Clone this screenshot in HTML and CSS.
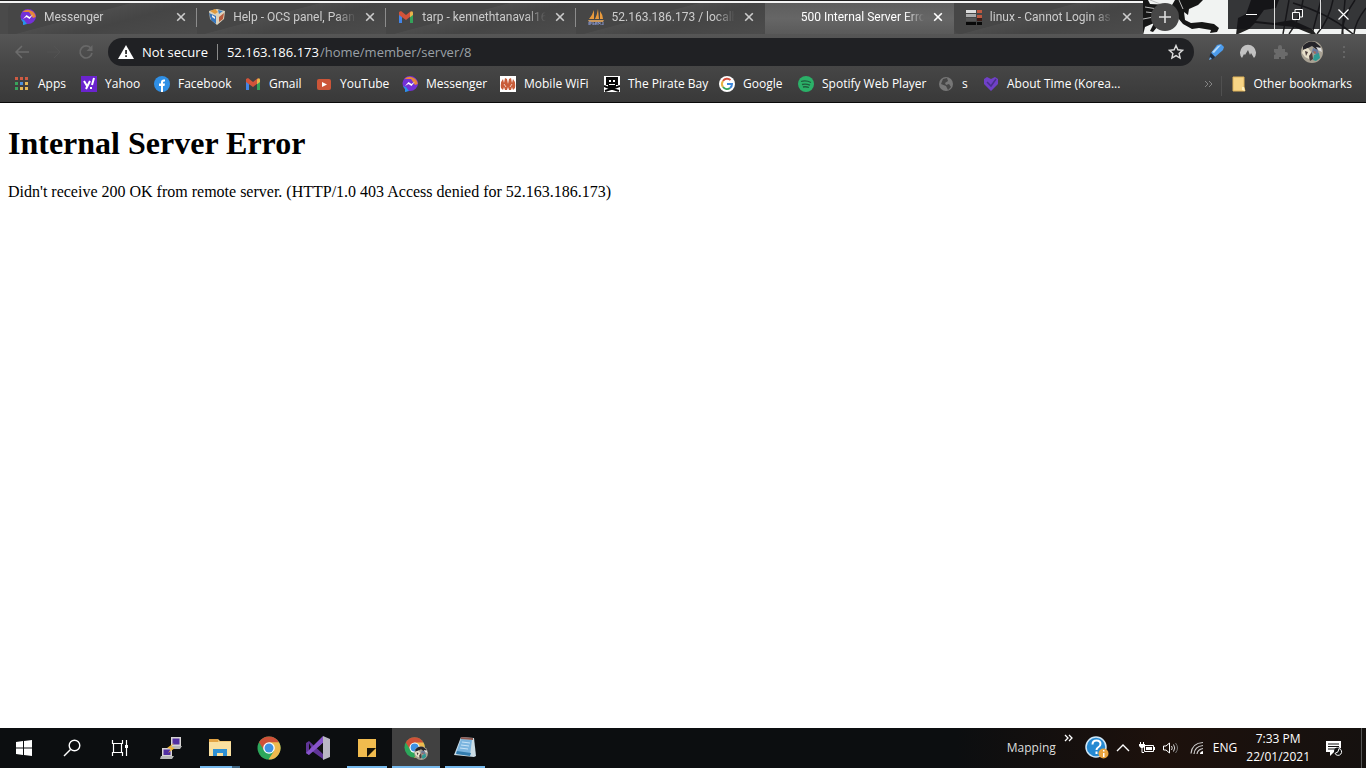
FILE: index.html
```html
<!DOCTYPE html>
<html lang="en">
<head>
<meta charset="utf-8">
<title>500 Internal Server Error</title>
<link rel="stylesheet" href="styles.css">
</head>
<body>
<svg class="defs" aria-hidden="true">
  <symbol id="messenger" viewBox="0 0 16 16"><path d="M8 0a8 7.500 0 0 1 0 15l-2-.3L3 16v-3A7.500 7.500 0 0 1 8 0z" fill="#7430d8"/><path d="M2.500 3A8 8 0 0 1 15.800 8L13 9 9 3z" fill="#e5863b"/><path d="M1 10l3 1 3 4-4 1v-3z" fill="#2795e9"/><path d="M3 10l3.500-4 3 2L13 5.500 9.500 10l-3-2z" fill="#fff"/></symbol>
  <symbol id="gmail" viewBox="0 0 16 16"><path d="M1 4v10h3V6z" fill="#4285e8"/><path d="M15 4v10h-3V6z" fill="#34a25a"/><path d="M1 3l2-1 5 4 5-4v5L8 11 3 7.500 1 6z" fill="#d3533a"/><path d="M12 3.500L14 2l1 1.500V6l-3 2.300z" fill="#eab34b"/></symbol>
  <symbol id="x" viewBox="0 0 10 10"><path d="M1.200 1.200l7.600 7.600m0-7.600L1.200 8.800" stroke="currentColor" stroke-width="1.600" fill="none"/></symbol>
  <symbol id="chrome" viewBox="0 0 24 24"><circle cx="12" cy="12" r="11.500" fill="#2ca75b"/><path d="M12 12L2 6.300A11.500 11.500 0 0 1 22 6.300z" fill="#cf5138"/><path d="M12 6.300h10A11.500 11.500 0 0 1 11.500 23.500L17 15z" fill="#eeb94e"/><path d="M2 6.300L7.500 15 12 6z" fill="#cf5138"/><circle cx="12" cy="12" r="5.800" fill="#fff"/><circle cx="12" cy="12" r="4.500" fill="#3f91e3"/></symbol>
  <symbol id="avatar" viewBox="0 0 22 22"><circle cx="11" cy="11" r="11" fill="#a9a294"/><path d="M2 5Q7-1 14 1l6 5-4 3-5-4-4 2-5 2z" fill="#25242a"/><path d="M2 9l5-2 3 4-2 7-4-2-3-4z" fill="#e7dfca"/><path d="M4 10l3 1-2 4zM8 15l3-4 1 7-3 2z" fill="#4b3c3c"/><path d="M12 7l5 2 1 5-4-1-3-2z" fill="#68799d"/><path d="M15 6l5 1 1 4-4-2z" fill="#ddd"/><path d="M13 14l5-2 1 5-4 3-3-1z" fill="#2f9a94"/><path d="M12 10l3 1-1 2z" fill="#b96742"/></symbol>
</svg>

<header class="browser">
  <div class="strip">
    <nav class="tabs" aria-label="Open tabs">
      <div class="tab">
        <svg class="ico"><use href="#messenger"/></svg><a class="tab-title" href="#">Messenger</a>
        <button class="close" aria-label="Close tab"><svg><use href="#x"/></svg></button>
      </div>
      <div class="tab">
        <svg class="ico" viewBox="0 0 16 16"><path d="M0 2l8-2 8 2-1 8-7 6-7-6z" fill="#dcd3bd"/><path d="M0 4l7 3v8L2 11z" fill="#3575bd"/><path d="M1 2l5-2 3 3-3 2z" fill="#e09a3c"/><path d="M9 1l5 1-4 3z" fill="#3e83c7"/><path d="M10 8l5-4-1 6-4 3z" fill="#b75a3c"/><path d="M3 6l3 2v2L3 8z" fill="#eee"/></svg><a class="tab-title" href="#">Help - OCS panel, Paan</a>
        <button class="close" aria-label="Close tab"><svg><use href="#x"/></svg></button>
      </div>
      <div class="tab">
        <svg class="ico"><use href="#gmail"/></svg><a class="tab-title" href="#">tarp - kennethtanaval16</a>
        <button class="close" aria-label="Close tab"><svg><use href="#x"/></svg></button>
      </div>
      <div class="tab">
        <svg class="ico" viewBox="0 0 16 16"><path d="M6 1v9H1q3-3 5-9zM10 0l1 10H7q2-4 3-10zM12 2q3 4 3 8h-3z" fill="#e99a3c"/><path d="M0 11h16l-1 2H1z" fill="#c9975c"/><path d="M1 16v-3h2v2H1m4-2v3m0-1h3v-2m0 3v-3m2 3v-3l2 2v-2m0 3h3v-3" stroke="#8493c9" fill="none"/></svg><a class="tab-title" href="#">52.163.186.173 / localh</a>
        <button class="close" aria-label="Close tab"><svg><use href="#x"/></svg></button>
      </div>
      <div class="tab active">
        <span class="ico"></span><a class="tab-title" href="#" aria-current="page">500 Internal Server Erro</a>
        <button class="close" aria-label="Close tab"><svg><use href="#x"/></svg></button>
      </div>
      <div class="tab">
        <svg class="ico" viewBox="0 0 16 16"><path d="M0 1h10v3H0z" fill="#ddd"/><path d="M0 5h10v3H0z" fill="#aaa"/><path d="M11 1h5v3h-5zM11 6h5v3h-5z" fill="#bd5840"/><path d="M11 9h5v3h-5z" fill="#3b1d18"/><path d="M0 9h10v3H0z" fill="#555"/><path d="M0 13h10v3H0zM11 13h5v3h-5z" fill="#090909"/></svg><a class="tab-title" href="#">linux - Cannot Login as</a>
        <button class="close" aria-label="Close tab"><svg><use href="#x"/></svg></button>
      </div>
    </nav>
    <div class="strip-end">
      <svg class="art" viewBox="0 0 223 34" preserveAspectRatio="none" aria-hidden="true">
        <path fill="#f1f3f2" d="M0 0h223v34H0z"/>
        <path fill="#161616" d="M0 0h5l2 4 22 1L32 0h28l-5 5-9 4-1 6-4-3 1 8 6 3 11-1 12 2 5 4-2 4-7 1 1-3-12-2-7 1-9-5-5-6-2 6-9 4-9-2-5 6-3-1 4-8-9 4-2 8z"/>
        <path d="M2 7l25 4M3 12l18 2M0 19l16-3M7 0l18 7M36 0l4 9" stroke="#bbb" fill="none"/>
        <path fill="#202020" d="M95 18l8-4 5-14h28l-3 8-12 2-8 11 18 2 18-3 20 9 4 5h-5l-17-7-20-2-19-2-6 6-13 6z"/>
        <path d="M146 0l-6 34M160 0q-2 18-14 34M178 0l-9 34M190 0q-4 20-16 34M202 0l-3 34M212 0q-14 20-12 34M223 8q-11 14-12 26M150 3q35 10 60 31" stroke="#222" stroke-width="1.500" fill="none"/>
      </svg>
      <button class="new-tab" aria-label="New tab"><svg viewBox="0 0 12 12"><path d="M6 0v12M0 6h12" stroke="#ddd" stroke-width="1.600"/></svg></button>
      <div class="window-controls">
        <button aria-label="Minimize"><svg viewBox="0 0 11 11"><path d="M0 5.500h11" stroke="#fff"/></svg></button>
        <button aria-label="Restore"><svg viewBox="0 0 11 11"><path d="M.5 3.500h7v7h-7zM3 3V.5h7.500V8H8" stroke="#fff" fill="none"/></svg></button>
        <button aria-label="Close"><svg viewBox="0 0 11 11"><path d="M.5.500l10 10m0-10l-10 10" stroke="#fff" stroke-width="1.200"/></svg></button>
      </div>
    </div>
  </div>

  <div class="toolbar">
    <button class="nav-button" aria-label="Back"><svg viewBox="0 0 16 16"><path d="M15 8H2m6-6L2 8l6 6" stroke="#6c6c6c" stroke-width="1.500" fill="none"/></svg></button>
    <button class="nav-button" aria-label="Forward"><svg viewBox="0 0 16 16"><path d="M1 8h13M8 2l6 6-6 6" stroke="#535353" stroke-width="1" fill="none"/></svg></button>
    <button class="nav-button" aria-label="Reload"><svg viewBox="0 0 16 16"><path d="M13 4.500A6 6 0 1 0 14 9" stroke="#686868" stroke-width="1.700" fill="none"/><path d="M14.500 1v6h-6z" fill="#686868"/></svg></button>
    <form class="address">
      <svg class="warn" viewBox="0 0 16 14"><path d="M8 0l8 14H0z" fill="#fff"/><path d="M7.200 5h1.700v4H7.200zM7.200 10.300h1.700V12H7.200z" fill="#222"/></svg>
      <span class="security">Not secure</span>
      <label for="url">52.163.186.173</label>
      <input id="url" type="text" value="/home/member/server/8">
      <button class="star" type="button" aria-label="Bookmark this page"><svg viewBox="0 0 16 16"><path d="M8 1.500l1.900 4.300 4.700.5-3.500 3.100 1 4.600L8 11.600 3.900 14l1-4.600L1.400 6.300l4.700-.5z" stroke="#ddd" stroke-width="1.400" fill="none"/></svg></button>
    </form>
    <div class="extensions">
      <button aria-label="Highlighter"><svg viewBox="0 0 16 16"><path d="M9 1l4-1 3 3-1 3-8 7-4-4z" fill="#4c9ced"/><path d="M10 2l3-1-7 8-2-1z" fill="#b9dcfa"/><path d="M3 9l4 4-2 2-4 1 1-5z" fill="#1d2d42"/><path d="M1 16l1-3 2 2z" fill="#7ab5ee"/></svg></button>
      <button aria-label="NordVPN"><svg viewBox="0 0 16 16"><path d="M2 14A8 8 0 1 1 14 14l-3-5-1 2-2-5-3 5-1-1z" fill="#c2c2c2"/></svg></button>
      <button aria-label="Extensions"><svg viewBox="0 0 16 16"><path d="M2 5h4V3a2 2 0 0 1 4 0v2h3v3h1a2 2 0 0 1 0 4h-1v3H9v-2H7v2H2v-4l2-1-2-2z" fill="#6b6b6b"/></svg></button>
      <button class="profile" aria-label="Profile"><svg><use href="#avatar"/></svg></button>
      <button aria-label="Menu"><svg viewBox="0 0 16 16"><path d="M7 2h2v2H7zM7 7h2v2H7zM7 12h2v2H7z" fill="#666"/></svg></button>
    </div>
  </div>

  <nav class="bookmarks" aria-label="Bookmarks">
    <a href="#"><svg class="ico" viewBox="0 0 16 16"><path d="M1 1h3v3H1zM6 1h3v3H6zM11 1h3v3h-3z" fill="#ce5b43"/><path d="M1 6h3v3H1zM1 11h3v3H1z" fill="#39a35c"/><path d="M6 6h3v3H6z" fill="#4b91dc"/><path d="M11 6h3v3h-3zM11 11h3v3h-3zM6 11h3v3H6z" fill="#e5b956"/></svg>Apps</a>
    <a href="#"><svg class="ico" viewBox="0 0 16 16"><path d="M0 0h16v16H0z" fill="#6b24cf"/><path d="M3 5l3 5M9 5l-4 8M13 2l-2 7M10 11v2" stroke="#fff" stroke-width="2" fill="none"/></svg>Yahoo</a>
    <a href="#"><svg class="ico" viewBox="0 0 16 16"><circle cx="8" cy="8" r="8" fill="#2f8fe5"/><path d="M7 16v-6H5V7.500h2V6q0-3 4-2.500v2q-2-.2-2 1v1h2L10.500 10H9v6z" fill="#fff"/></svg>Facebook</a>
    <a href="#"><svg class="ico"><use href="#gmail"/></svg>Gmail</a>
    <a href="#"><svg class="ico" viewBox="0 0 16 16"><rect x="1" y="3" width="14" height="11" rx="2" fill="#cc5538"/><path d="M6 6l5 2.500L6 11z" fill="#fff"/></svg>YouTube</a>
    <a href="#"><svg class="ico"><use href="#messenger"/></svg>Messenger</a>
    <a href="#"><svg class="ico" viewBox="0 0 16 16"><path d="M0 0h16v16H0z" fill="#fff"/><path d="M1 12Q0 6 3 3l1 4 1-5 2 1 1 5 1-5 2-1 1 5 1-4q3 3 2 9l-2 2-1-3-1 3H9l-1-3-1 3H5l-1-3-1 3z" fill="#c95c38"/><path d="M4 8l2 3M12 8l-2 3" stroke="#fff" stroke-width=".7"/></svg>Mobile WiFi</a>
    <a href="#"><svg class="ico" viewBox="0 0 16 16"><path d="M0 0h16v16H0z" fill="#fff"/><path d="M2 1h12v8H2zM4 9h8v3H4z" fill="#080808"/><path d="M5 4h2v2H5zM9 4h2v2H9zM5 8h6v1H5z" fill="#fff"/><path d="M0 10l5 2 3 1 8-3M1 15l6-2h2l6 2" stroke="#080808" stroke-width="2" fill="none"/></svg>The Pirate Bay</a>
    <a href="#"><svg class="ico" viewBox="0 0 16 16"><circle cx="8" cy="8" r="8" fill="#fff"/><path d="M4 5a5 5 0 0 1 7.500-1" stroke="#d64e3b" stroke-width="2" fill="none"/><path d="M4 5a5 5 0 0 0 0 6" stroke="#e7b143" stroke-width="2" fill="none"/><path d="M4 11a5 5 0 0 0 7 1" stroke="#35a45b" stroke-width="2" fill="none"/><path d="M8 8h5a5 5 0 0 1-2 4" stroke="#3c87dc" stroke-width="2" fill="none"/></svg>Google</a>
    <a href="#"><svg class="ico" viewBox="0 0 16 16"><circle cx="8" cy="8" r="8" fill="#2bb168"/><path d="M3 5.500q5-1.500 10 1M4 8.500q4-1 8 .7M5 11q3-.7 6 .5" stroke="#205c3c" stroke-width="1.300" fill="none"/></svg>Spotify Web Player</a>
    <a href="#"><svg class="ico" viewBox="0 0 16 16"><circle cx="8" cy="8" r="7" fill="#777"/><path d="M5 3l4-1 1 3-3 2 1 2 3-1 2 3-3 3-2-4-5-2z" fill="#464646"/></svg>s</a>
    <a href="#"><svg class="ico" viewBox="0 0 16 16"><path d="M8 15L1 8V3l3-2 4 2 4-2 3 2v5z" fill="#7040c8"/><path d="M4 6l4 4 5-7" stroke="#47308a" stroke-width="1.500" fill="none"/></svg>About Time (Korea...</a>
    <button class="overflow" aria-label="More bookmarks"><svg viewBox="0 0 9 8"><path d="M1 1l3 3-3 3m4-6l3 3-3 3" stroke="#858585" fill="none"/></svg></button>
    <a class="other" href="#"><svg class="ico" viewBox="0 0 16 16"><path d="M2 1h11v10l1 4H2z" fill="#f7d586" stroke="#dfb35b"/><path d="M11 14v-3h2l1 4z" fill="#fff0bd"/></svg>Other bookmarks</a>
  </nav>
</header>

<main class="page">
  <h1>Internal Server Error</h1>
  <p>Didn't receive 200 OK from remote server. (HTTP/1.0 403 Access denied for 52.163.186.173)</p>
</main>

<footer class="taskbar">
  <div class="system">
    <button aria-label="Start"><svg viewBox="0 0 24 24"><path d="M4 6l7-1v6.500H4zM12 5l8-1v7.500h-8zM4 12.500h7V19l-7-1zM12 12.500h8V20l-8-1z" fill="#fff"/></svg></button>
    <button aria-label="Search"><svg viewBox="0 0 24 24"><circle cx="14.500" cy="9.500" r="5.300" stroke="#fff" stroke-width="1.400" fill="none"/><path d="M10.500 13.500L4 20" stroke="#fff" stroke-width="1.500"/></svg></button>
    <button aria-label="Task view"><svg viewBox="0 0 24 24"><path d="M4.500 4v3.500h10V4M4.500 20v-3.500h10V20M5.500 7.500v9M13.500 7.500v9M18.500 4v16" stroke="#fff" stroke-width="1.200" fill="none"/><path d="M17 9h3v3h-3z" fill="#fff"/></svg></button>
  </div>
  <div class="apps">
    <button aria-label="PuTTY"><svg viewBox="0 0 24 24"><path d="M12 1h10v9H12zM3 12h10v8H3z" fill="#d8d5d5"/><path d="M13.500 2.500h7v6h-7zM4.500 13.500h7V19h-7z" fill="#522fa2"/><path d="M12 10h11l-2 3h-9zM2 20h13l-2 3H1z" fill="#b8b8b8"/><path d="M15 7l-7 5 4 1-3 4 7-5-4-1z" fill="#efb536"/></svg></button>
    <button class="open stacked" aria-label="File Explorer"><svg viewBox="0 0 24 24"><path d="M1 3h9l2 2h11v15H1z" fill="#f0c775"/><path d="M1 3h9v3H1z" fill="#e3a343"/><path d="M1 6h22v14H1z" fill="#fae0a0"/><path d="M5 20v-7h14v7h-4v-3H9v3z" fill="#2f91d5"/></svg></button>
    <button aria-label="Google Chrome"><svg><use href="#chrome"/></svg></button>
    <button aria-label="Visual Studio"><svg viewBox="0 0 24 24"><path d="M0 7l3-2 14 13v5L3 13v6l-3-2z" fill="#603598"/><path d="M3 7l2 4-2 5z" fill="#0c0c0c"/><path d="M0 17l17-17v7L3 19z" fill="#8754cb"/><path d="M17 0l7 3v18l-7 3z" fill="#bab7c4"/><path d="M17 7v10l-5-5z" fill="#111"/></svg></button>
    <button class="open" aria-label="Sticky Notes"><svg viewBox="0 0 24 24"><path d="M3 3h18v18H3z" fill="#f1bb4e"/><path d="M12 12h9l-9 9z" fill="#181307"/></svg></button>
    <button class="open current" aria-label="Google Chrome, profile window"><svg viewBox="0 0 26 24"><use href="#chrome" width="23" height="23"/><use href="#avatar" x="11" y="10" width="15" height="15"/></svg></button>
    <button class="open" aria-label="Notepad"><svg viewBox="0 0 24 24"><path d="M8 1l13 1 2 18-2 1L1 19z" fill="#cbdce5"/><path d="M8 3l11 1-2 15-14-2z" fill="#7bb5df"/><path d="M4 15l14 2-1 3-14-2z" fill="#337daf"/><path d="M9 6l8 1M8 9l8 1M7 12l8 1" stroke="#dceffc" stroke-width=".8"/><path d="M8 1l12 1v2L8 3z" fill="#8c5850"/></svg></button>
  </div>
  <div class="tray">
    <span class="mapping">Mapping</span>
    <button class="more" aria-label="Show toolbar"><svg viewBox="0 0 9 8"><path d="M1 1l3 3-3 3m4-6l3 3-3 3" stroke="#fff" stroke-width="1.300" fill="none"/></svg></button>
    <button class="help" aria-label="Get help"><svg viewBox="0 0 24 24"><circle cx="11" cy="11" r="10" fill="#2489d2" stroke="#cfe7f8" stroke-width="1.500"/><path d="M7.500 8.500q0-4 4-4t4 3.500q0 2-2.500 3.500-1.500 1-1.500 2.500" stroke="#fff" stroke-width="2" fill="none"/><path d="M10.500 15.500h2V18h-2z" fill="#fff"/><circle cx="18.500" cy="17.500" r="5" fill="#e9a43f"/><path d="M18 14h1.500v1.500H18zM18 17h1.500v4H18z" fill="#fff"/></svg></button>
    <button class="status" aria-label="Show hidden icons"><svg viewBox="0 0 16 16"><path d="M2 11l6-6 6 6" stroke="#fff" stroke-width="1.400" fill="none"/></svg></button>
    <button class="status" aria-label="Battery"><svg viewBox="0 0 16 16"><path d="M5.500 5.500h9v6h-9zM15.500 7v3M1.500 2v3M4.500 2v3M3 8v4.500h2" stroke="#fff" fill="none"/><path d="M0 4h6v2L4 8H2L0 6zM7 7h6v3H7z" fill="#fff"/></svg></button>
    <button class="status" aria-label="Volume"><svg viewBox="0 0 16 16"><path d="M.5 6v4H3l3.500 3V3L3 6z" stroke="#fff" fill="none"/><path d="M8.500 6q1.500 2 0 4M10.500 4.500q2.500 3.500 0 7" stroke="#ddd" fill="none"/><path d="M12.500 3q4 5 0 10" stroke="#777" fill="none"/></svg></button>
    <button class="status wifi" aria-label="Network"><svg viewBox="0 0 16 16"><path d="M2 13.500Q3 3 14 2.500M5 14q.5-7.500 9-8.500M8 14q.5-4.500 6-5.500" stroke="#ccc" stroke-width="1.200" fill="none"/><path d="M11 14q0-2.500 3-3v3z" fill="#fff"/></svg></button>
    <button class="language">ENG</button>
    <button class="clock"><time datetime="2021-01-22T19:33">7:33 PM<br>22/01/2021</time></button>
    <button class="notifications" aria-label="Notifications"><svg viewBox="0 0 18 18"><path d="M1 2h15v11H9l-4 4v-4H1z" fill="#fff"/><path d="M3 5h11M3 7.500h11M3 10h8" stroke="#111"/><circle cx="13" cy="12.500" r="4" fill="#111"/><path d="M14 9.500a3.500 3.500 0 1 1-4 5q4-1 4-5z" stroke="#fff" fill="none"/></svg></button>
    <button class="show-desktop" aria-label="Show desktop"></button>
  </div>
</footer>
</body>
</html>
```
FILE: styles.css
```css
* { box-sizing: border-box; }
body {
  margin: 0;
  min-height: 100vh;
  display: flex;
  flex-direction: column;
  background: #fff;
  font: 12px/16px "Open Sans", "Noto Sans", sans-serif;
}
.defs { position: absolute; width: 0; height: 0; }
svg { display: block; }
a { color: inherit; text-decoration: none; }
button {
  display: flex;
  align-items: center;
  justify-content: center;
  flex: none;
  padding: 0;
  border: 0;
  background: none;
  color: inherit;
  font: inherit;
}
.ico { flex: none; width: 16px; height: 16px; }

.browser {
  background: linear-gradient(#5a5a5a, #565656 34px, #464646 66px, #393939);
  border-bottom: 1px solid #090909;
  color: #fff;
}
.strip { display: flex; height: 34px; background: #f0f0f0; }
.tabs {
  display: flex;
  flex: 0 1 1143px;
  min-width: 0;
  padding: 3px 0 0 8px;
  background: linear-gradient(#202020 1px, #f4f4f4 1px, #f4f4f4 3px, #4a4a4a 3px);
}
.tab {
  display: flex;
  align-items: center;
  flex: 1 1 0;
  min-width: 0;
  gap: 8px;
  padding: 0 10px 3px 12px;
  background: linear-gradient(165deg, #464646 40%, #4d4d4d 41%, #454545 60%, #4c4c4c);
  color: #ccc;
  font-family: Roboto, "Open Sans", sans-serif;
  position: relative;
}
.tab:nth-child(-n+3)::after {
  content: "";
  position: absolute;
  right: 0;
  top: 5px;
  width: 1px;
  height: 19px;
  background: #8c8c8c;
}
.tab:first-child { border-top-left-radius: 6px; }
.tab:nth-child(4) { border-bottom-right-radius: 6px; }
.tab:last-child { border-bottom-left-radius: 6px; }
.tab.active { background: linear-gradient(#5e5e5e, #666 50%, #5a5a5a); color: #fff; }
.tab-title {
  flex: 1;
  min-width: 0;
  overflow: hidden;
  white-space: nowrap;
  mask-image: linear-gradient(to right, #000 calc(100% - 20px), transparent);
}
.close { width: 12px; height: 16px; }
.close svg { width: 10px; height: 10px; }
.strip-end {
  position: relative;
  display: flex;
  flex: 1;
  justify-content: space-between;
  align-items: flex-start;
}
.art { position: absolute; inset: 0; width: 100%; height: 100%; }
.new-tab {
  position: relative;
  width: 28px;
  height: 28px;
  margin: 3px 0 0 8px;
  border-radius: 50%;
  background: #474747;
}
.new-tab svg { width: 12px; height: 12px; }
.window-controls { position: relative; display: flex; }
.window-controls button {
  width: 46px;
  height: 29px;
  background: rgba(20, 20, 24, 0.85);
}
.window-controls button + button { border-left: 1px solid #ddd; }
.window-controls svg { width: 11px; height: 11px; }

.toolbar { display: flex; align-items: center; height: 36px; padding: 0 14px 0 6px; }
.nav-button { width: 32px; height: 28px; }
.nav-button svg { width: 16px; height: 16px; }
.address {
  display: flex;
  align-items: center;
  flex: 1;
  height: 28px;
  margin-left: 6px;
  padding: 0 10px;
  border-radius: 14px;
  background: #202124;
  font-size: 13px;
}
.warn { width: 16px; height: 14px; margin-right: 8px; }
.security { margin-right: 9px; padding-right: 9px; border-right: 1px solid #8a8a8a; }
.address input {
  flex: 1;
  min-width: 0;
  padding: 0 0 0 1px;
  border: 0;
  outline: 0;
  background: none;
  color: #9aa0a6;
  font: inherit;
}
.star svg { width: 16px; height: 16px; }
.extensions { display: flex; align-items: center; gap: 16px; margin-left: 14px; }
.extensions svg { width: 16px; height: 16px; }
.extensions .profile { margin: 0 -3px; }
.extensions .profile svg { width: 22px; height: 22px; }

.bookmarks {
  display: grid;
  grid-template-columns: 67px 73px 91px 71px 86px 98px 104px 115px 79px 140px 45px auto 1fr auto;
  align-items: center;
  height: 32px;
  padding: 0 14px;
  white-space: nowrap;
}
.bookmarks > a { display: flex; align-items: center; gap: 8px; padding-bottom: 4px; }
.overflow { justify-self: end; margin-right: 8px; padding-bottom: 4px; }
.overflow svg { width: 9px; height: 8px; }
.bookmarks .other { gap: 6px; padding-left: 9px; border-left: 1px solid #505050; }

.page {
  flex: 1;
  padding: 0 8px;
  color: #000;
  font: 16px/18px "Liberation Serif", "Times New Roman", serif;
}
.page h1 { margin: 22px 0 21px; font-size: 32px; line-height: 37px; }
.page p { margin: 0; }

.taskbar {
  display: flex;
  justify-content: space-between;
  height: 40px;
  background: linear-gradient(to right, #0c0e10 70%, #1d110c 85%, #15110f);
  color: #fff;
}
.system, .apps, .tray { display: flex; }
.system button, .apps button { width: 48px; height: 40px; }
.system svg, .apps svg { width: 24px; height: 24px; }
.apps { flex: 1; gap: 1px; margin-left: 3px; }
.apps button { border: solid transparent; border-width: 2px 0; }
.apps .open {
  background: linear-gradient(#76b9ed, #76b9ed) bottom / 40px 2px no-repeat border-box;
}
.apps .stacked {
  background: linear-gradient(to right, #76b9ed 80%, #3e6481 80%) bottom / 40px 2px no-repeat border-box;
}
.apps .current { border-bottom-color: #76b9ed; background: #414141; }
.tray { align-items: center; }
.mapping { color: #ddd; }
.more { align-self: flex-start; margin: 6px 12px 0 8px; }
.more svg { width: 9px; height: 8px; }
.help svg { width: 24px; height: 24px; }
.status { width: 24px; height: 40px; }
.status svg { width: 16px; height: 16px; }
.help + .status { margin-left: 2px; }
.wifi { margin-left: 2px; }
.language { margin-left: 4px; }
.clock { margin-left: 9px; line-height: 18px; }
.notifications { margin: 0 18px 0 15px; }
.notifications svg { width: 18px; height: 18px; }
.show-desktop { width: 5px; height: 40px; border-left: 1px solid #555; }
```
